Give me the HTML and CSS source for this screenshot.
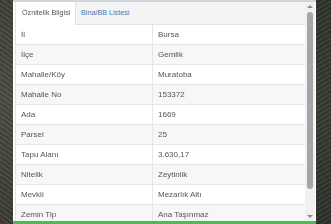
FILE: index.html
```html
<!DOCTYPE html>
<html lang="tr">
<head>
<meta charset="utf-8">
<link rel="stylesheet" href="styles.css">
</head>
<body>
<div class="screen">
  <div class="map map-left"></div>
  <div class="panel">
    <div class="top-band"></div>
    <div class="content">
      <div class="main">
        <div class="tabs">
          <div class="tab active">Öznitelik Bilgisi</div>
          <div class="tab link">Bina/BB Listesi</div>
        </div>
        <table class="attrs">
          <tr><td>İl</td><td>Bursa</td></tr>
          <tr><td>İlçe</td><td>Gemlik</td></tr>
          <tr><td>Mahalle/Köy</td><td>Muratoba</td></tr>
          <tr><td>Mahalle No</td><td>153372</td></tr>
          <tr><td>Ada</td><td>1669</td></tr>
          <tr><td>Parsel</td><td>25</td></tr>
          <tr><td>Tapu Alanı</td><td>3.630,17</td></tr>
          <tr><td>Nitelik</td><td>Zeytinlik</td></tr>
          <tr><td>Mevkii</td><td>Mezarlık Altı</td></tr>
          <tr><td>Zemin Tip</td><td>Ana Taşınmaz</td></tr>
        </table>
      </div>
      <div class="scrollbar">
        <div class="arrow up"></div>
        <div class="thumb"></div>
        <div class="spacer"></div>
        <div class="arrow down"></div>
      </div>
    </div>
    <div class="green-bar"></div>
  </div>
  <div class="map map-right"></div>
</div>
</body>
</html>
```
FILE: styles.css
```css
html, body {
  margin: 0;
  padding: 0;
}
body {
  width: 331px;
  height: 224px;
  overflow: hidden;
  font-family: "Liberation Sans", Arial, sans-serif;
  font-size: 8px;
  color: #555;
}
.screen {
  display: flex;
  width: 331px;
  height: 224px;
}
.map {
  height: 224px;
}
.map-left {
  width: 13px;
  background:
    repeating-linear-gradient(35deg, rgba(255,255,255,0.06) 0 2px, rgba(0,0,0,0.08) 2px 4px),
    linear-gradient(180deg, #3e4035 0%, #4a4b40 45%, #3a3a32 100%);
}
.map-right {
  width: 15px;
  background:
    repeating-linear-gradient(-30deg, rgba(255,255,255,0.05) 0 2px, rgba(0,0,0,0.08) 2px 4px),
    linear-gradient(180deg, #2f332c 0%, #363a31 50%, #2d302a 100%);
}
.panel {
  width: 303px;
  height: 224px;
  display: flex;
  flex-direction: column;
  background: #fff;
}
.top-band {
  height: 2px;
  background: #cbd6de;
  flex: none;
}
.content {
  flex: 1;
  display: flex;
  overflow: hidden;
  padding-left: 2px;
}
.main {
  width: 290px;
  flex: none;
  overflow: hidden;
}
.tabs {
  height: 23px;
  display: flex;
  background: #f4f4f4;
  border-bottom: 1px solid #e2e2e2;
  box-sizing: border-box;
  font-size: 7.2px;
}
.tab {
  height: 23px;
  line-height: 22px;
  box-sizing: border-box;
  white-space: nowrap;
}
.tab.active {
  width: 61px;
  padding-left: 6px;
  background: #fff;
  border-right: 1px solid #e2e2e2;
  border-left: 1px solid #e6e6e6;
  color: #555;
  filter: grayscale(1);
}
.tab.link {
  color: #3a7bb5;
  padding-left: 5px;
}
.attrs {
  width: 290px;
  border-collapse: collapse;
  border-left: 1px solid #e2e2e2;
  filter: grayscale(1);
}
.attrs td {
  height: 19px;
  padding: 0 0 0 5px;
  border-bottom: 1px solid #e6e6e6;
  line-height: 19px;
  white-space: nowrap;
  vertical-align: middle;
  color: #555;
}
.attrs td:first-child {
  width: 131px;
  border-right: 1px solid #e6e6e6;
}
.attrs tr:nth-child(even) td {
  background: #f7f7f7;
}
.scrollbar {
  width: 10px;
  flex: none;
  display: flex;
  flex-direction: column;
  align-items: center;
  background: #f1f1f1;
}
.arrow {
  width: 0;
  height: 0;
  border-left: 3px solid transparent;
  border-right: 3px solid transparent;
  flex: none;
}
.arrow.up {
  margin-top: 3px;
  border-bottom: 3px solid #8a8a8a;
}
.arrow.down {
  margin-bottom: 3px;
  border-top: 3px solid #8a8a8a;
}
.thumb {
  width: 6px;
  height: 177px;
  margin-top: 4px;
  background: #a6a6a6;
  border-radius: 3px;
  flex: none;
}
.spacer {
  flex: 1;
}
.green-bar {
  height: 3px;
  background: #4cbb52;
  flex: none;
}
```
